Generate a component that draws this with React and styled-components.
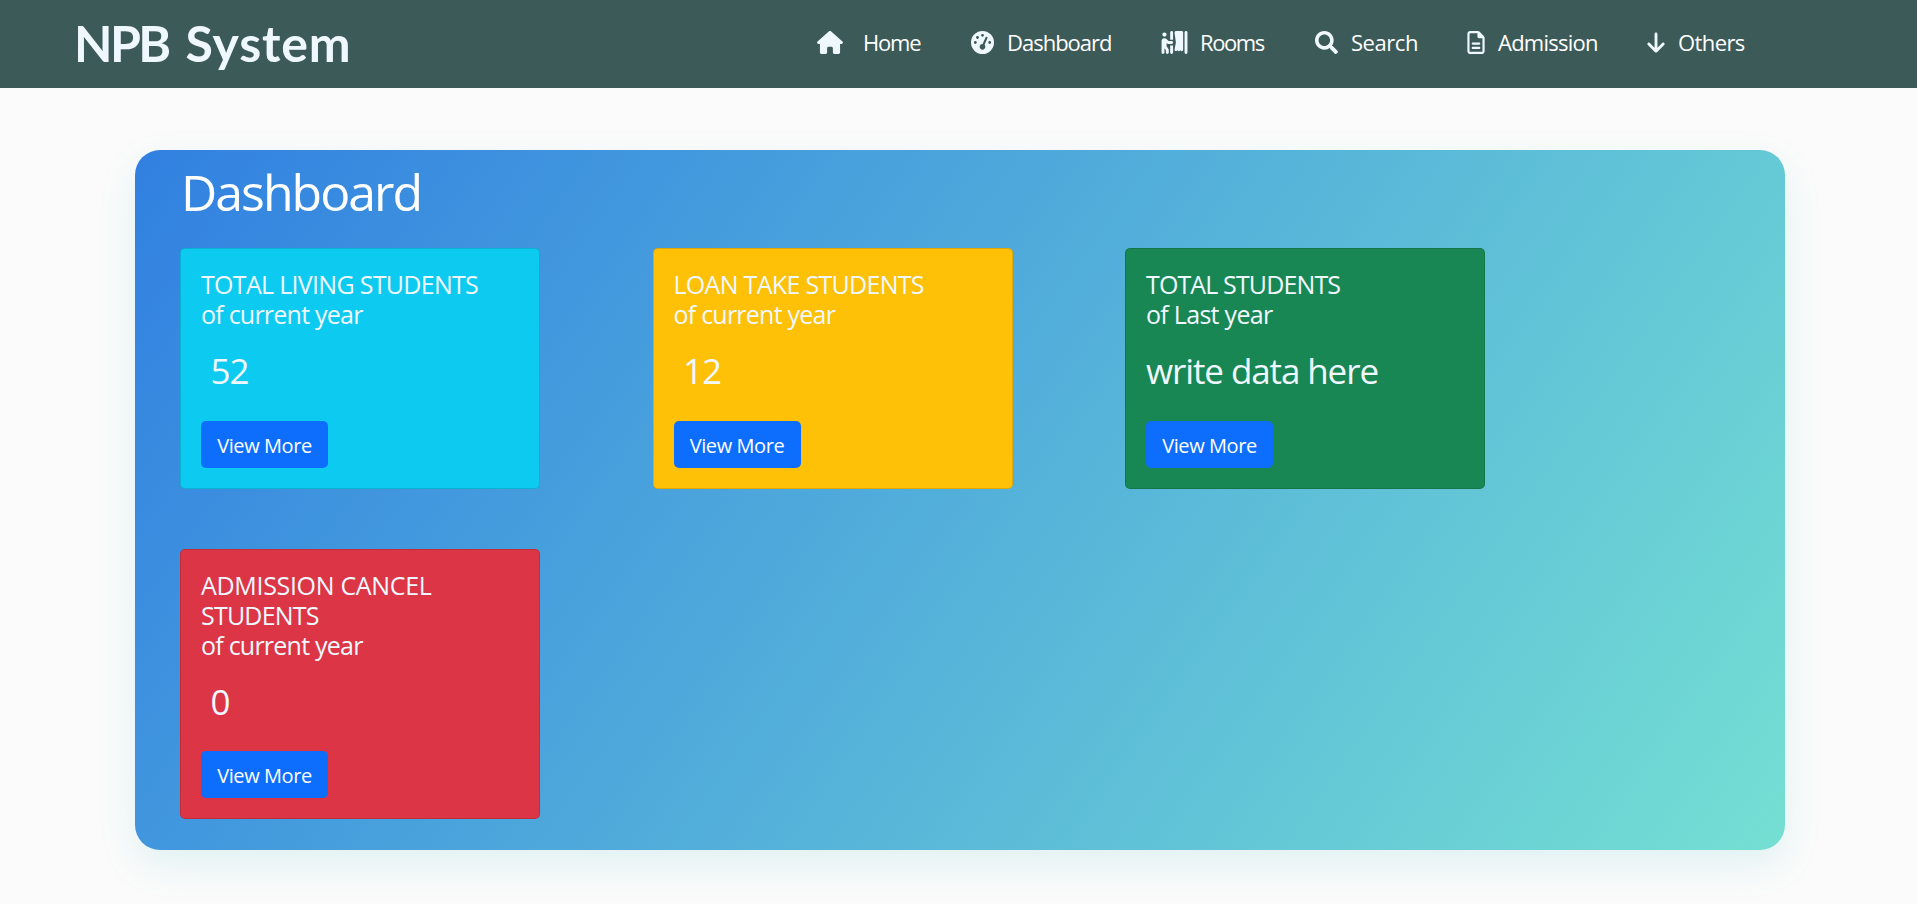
import React from "react";
import styled, { createGlobalStyle } from "styled-components";
import { FaHouse, FaGaugeHigh, FaPersonBooth, FaRegFileLines, FaArrowDown } from "react-icons/fa6";
import { FaSearch } from "react-icons/fa";

const GlobalStyle = createGlobalStyle`
  * { box-sizing: border-box; }
  body {
    margin: 0;
    background: #fbfbfb;
    color: aliceblue;
    font-family: "Open Sans", "Noto Sans", sans-serif;
    font-size: 20px;
    line-height: 1.5;
  }
  h1, h2, h3, p { margin: 0; font-weight: 400; }
`;

const Page = styled.div`
  height: 904px;
  overflow: hidden;
`;

const Header = styled.header`
  display: flex;
  align-items: flex-start;
  justify-content: space-between;
  height: 88px;
  padding: 0 172px 0 74px;
  background: #3c5a58;
`;

const Brand = styled.a`
  font-family: Lato, "Open Sans", sans-serif;
  font-size: 50px;
  font-weight: 700;
  line-height: 87px;
  letter-spacing: 0.8px;
  white-space: nowrap;
`;

const BrandInitials = styled.span`
  letter-spacing: -2.6px;
  margin-right: 4px;
`;

const Nav = styled.nav`
  display: flex;
  align-items: center;
  height: 85px;
`;

const NavLink = styled.a`
  display: flex;
  align-items: center;
  width: ${(p) => p.$width}px;
  color: #fff;
  font-size: 22px;
  font-weight: 500;
  letter-spacing: ${(p) => p.$spacing}px;
  white-space: nowrap;

  svg {
    flex: none;
    margin-right: ${(p) => p.$gap}px;
    height: 23px;
    width: ${(p) => p.$icon}px;
    color: aliceblue;
  }
`;

const Panel = styled.main`
  width: 1650px;
  height: 700px;
  margin: 62px 0 0 135px;
  padding: 11px 45px 0;
  border-radius: 25px;
  background: linear-gradient(125deg, #3180e1, #75dfd3);
  box-shadow: 0 15px 38px rgba(36, 170, 180, 0.12);
`;

const Title = styled.h1`
  height: 87px;
  padding-left: 1px;
  color: #fff;
  font-size: 50px;
  line-height: 62px;
  letter-spacing: -2px;
`;

const Cards = styled.section`
  display: grid;
  grid-template-columns: repeat(3, 360px);
  column-gap: 112.5px;
  row-gap: 60px;
  align-items: start;
`;

const Card = styled.article`
  padding: 20px;
  border: 1px solid rgba(0, 0, 0, 0.125);
  border-radius: 5px;
  background: ${(p) => p.$color};
`;

const CardTitle = styled.h2`
  margin-bottom: 15px;
  font-size: 25px;
  line-height: 30px;
`;

const TitleLine = styled.span`
  display: block;
  letter-spacing: ${(p) => p.$spacing}px;
`;

const Value = styled.p`
  height: 76.6px;
  padding: 4px 0 0 ${(p) => (p.$inset ? 9.5 : 0)}px;
  font-size: 35px;
  line-height: 46px;
  letter-spacing: -1.1px;
`;

const Button = styled.button`
  display: block;
  width: 127px;
  height: 47px;
  padding: 3px 0 0;
  border: 0;
  border-radius: 5px;
  background: #0d6efd;
  color: #fff;
  font: inherit;
  font-size: 20px;
  letter-spacing: -0.4px;
`;

const links = [
  { label: "Home", Icon: FaHouse, icon: 26, gap: 20, width: 154, spacing: -1.2 },
  { label: "Dashboard", Icon: FaGaugeHigh, icon: 23, gap: 13, width: 190, spacing: -1 },
  { label: "Rooms", Icon: FaPersonBooth, icon: 27, gap: 12, width: 154, spacing: -1.4 },
  { label: "Search", Icon: FaSearch, icon: 23, gap: 13, width: 152, spacing: -0.45 },
  { label: "Admission", Icon: FaRegFileLines, icon: 18, gap: 13, width: 179, spacing: -0.75 },
  { label: "Others", Icon: FaArrowDown, icon: 20, gap: 12, width: 99, spacing: -0.6 },
];

const cards = [
  {
    lines: [["TOTAL LIVING STUDENTS", -0.7], ["of current year", -0.77]],
    value: "52",
    inset: true,
    color: "#0dcaf0",
  },
  {
    lines: [["LOAN TAKE STUDENTS", -0.7], ["of current year", -0.77]],
    value: "12",
    inset: true,
    color: "#ffc107",
  },
  {
    lines: [["TOTAL STUDENTS", -0.87], ["of Last year", -0.7]],
    value: "write data here",
    color: "#198754",
  },
  {
    lines: [["ADMISSION CANCEL", -0.32], ["STUDENTS", -0.8], ["of current year", -0.77]],
    value: "0",
    inset: true,
    color: "#dc3545",
  },
];

export default function App() {
  return (
    <Page>
      <GlobalStyle />
      <Header>
        <Brand>
          <BrandInitials>NPB</BrandInitials> System
        </Brand>
        <Nav>
          {links.map(({ label, Icon, icon, gap, width, spacing }) => (
            <NavLink key={label} $icon={icon} $gap={gap} $width={width} $spacing={spacing}>
              <Icon />
              {label}
            </NavLink>
          ))}
        </Nav>
      </Header>
      <Panel>
        <Title>Dashboard</Title>
        <Cards>
          {cards.map((c) => (
            <Card key={c.color} $color={c.color}>
              <CardTitle>
                {c.lines.map(([text, spacing]) => (
                  <TitleLine key={text} $spacing={spacing}>
                    {text}
                  </TitleLine>
                ))}
              </CardTitle>
              <Value $inset={c.inset}>{c.value}</Value>
              <Button>View More</Button>
            </Card>
          ))}
        </Cards>
      </Panel>
    </Page>
  );
}
